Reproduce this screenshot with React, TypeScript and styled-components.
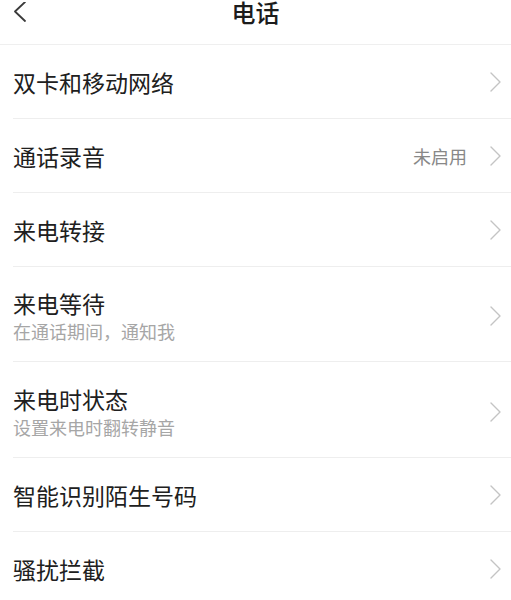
import React from "react";
import styled, { createGlobalStyle } from "styled-components";

const Global = createGlobalStyle`
  html, body { margin: 0; padding: 0; background: #ffffff; }
  body { font-family: "Noto Sans CJK SC", "Noto Sans", sans-serif; -webkit-font-smoothing: antialiased; }
  * { box-sizing: border-box; }
`;

const Page = styled.div`
  width: 511px;
  height: 600px;
  overflow: hidden;
  background: #ffffff;
`;

const Header = styled.header`
  display: grid;
  grid-template-columns: 1fr auto 1fr;
  align-items: center;
  height: 45px;
  padding-bottom: 28px;
  border-bottom: 1px solid #efefef;
`;

const BackButton = styled.div`
  display: flex;
  align-items: center;
  padding-left: 13px;
  height: 20px;
  color: #333;
`;

const Title = styled.h1`
  margin: 0;
  font-size: 24px;
  line-height: 24px;
  font-weight: 500;
  color: #1c1c1c;
  letter-spacing: 0px;
`;

const List = styled.div`
  display: flex;
  flex-direction: column;
`;

const Row = styled.div<{ $h: number; $pt?: number }>`
  display: flex;
  align-items: center;
  height: ${(p) => p.$h}px;
  margin-left: 13px;
  padding-right: 10px;
  padding-top: ${(p) => p.$pt ?? 0}px;
  border-bottom: 1px solid #eeeeee;
`;

const TextBlock = styled.div`
  display: flex;
  flex-direction: column;
  flex: 1;
  min-width: 0;
`;

const ItemTitle = styled.div`
  font-size: 23px;
  line-height: 30px;
  color: #202020;
  font-weight: 400;
`;

const ItemSub = styled.div`
  font-size: 18px;
  line-height: 26px;
  color: #a6a6a6;
`;

const Value = styled.span`
  font-size: 18px;
  color: #888888;
  margin-right: 23px;
`;

const Chevron = () => (
  <svg width="11" height="20" viewBox="0 0 11 20" fill="none">
    <path d="M1 1 L10 10 L1 19" stroke="#c4c4c4" strokeWidth="1.4" strokeLinecap="round" strokeLinejoin="round" />
  </svg>
);

const BackIcon = () => (
  <svg width="14" height="20" viewBox="0 0 14 20" fill="none">
    <path d="M12 0 L2 9.5 L12 19" stroke="#3a3a3a" strokeWidth="1.8" strokeLinecap="round" strokeLinejoin="round" />
  </svg>
);

type Item = { title: string; sub?: string; value?: string; h: number; pt?: number };

const items: Item[] = [
  { title: "双卡和移动网络", h: 74 },
  { title: "通话录音", value: "未启用", h: 74 },
  { title: "来电转接", h: 74 },
  { title: "来电等待", sub: "在通话期间，通知我", h: 95, pt: 4 },
  { title: "来电时状态", sub: "设置来电时翻转静音", h: 96, pt: 4 },
  { title: "智能识别陌生号码", h: 74 },
  { title: "骚扰拦截", h: 74 },
];

export default function App() {
  return (
    <Page>
      <Global />
      <Header>
        <BackButton>
          <BackIcon />
        </BackButton>
        <Title>电话</Title>
        <div />
      </Header>
      <List>
        {items.map((it) => (
          <Row key={it.title} $h={it.h} $pt={it.pt}>
            <TextBlock>
              <ItemTitle>{it.title}</ItemTitle>
              {it.sub && <ItemSub>{it.sub}</ItemSub>}
            </TextBlock>
            {it.value && <Value>{it.value}</Value>}
            <Chevron />
          </Row>
        ))}
      </List>
    </Page>
  );
}
